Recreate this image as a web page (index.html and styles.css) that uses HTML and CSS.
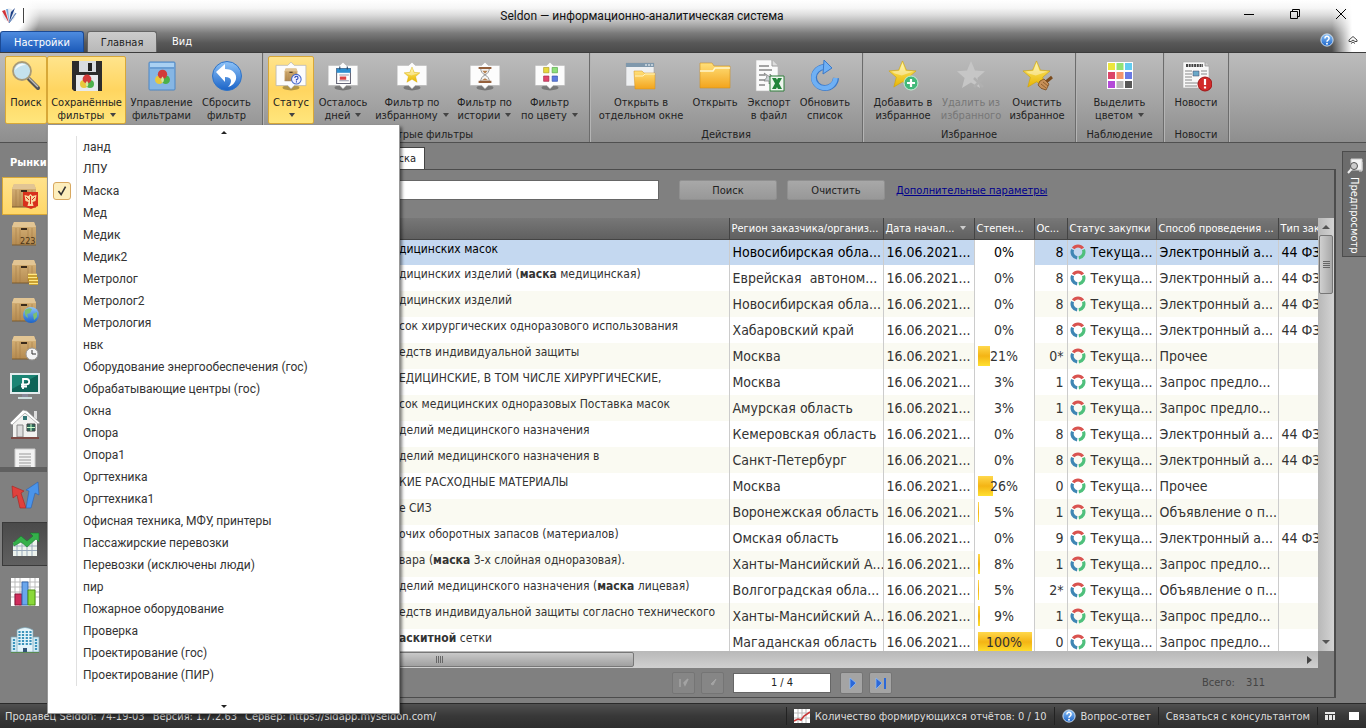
FILE: index.html
```html
<!DOCTYPE html>
<html lang="ru">

<head>
  <meta charset="utf-8">
  <meta name="viewport" content="width=device-width,initial-scale=1">
  <title>Seldon — информационно-аналитическая система</title>
  <link rel="stylesheet" href="styles.css">
</head>

<body>
  <!-- shared icon parts -->
  <svg class="defs" width="0" height="0" aria-hidden="true">
    <defs>
      <linearGradient id="gBlue" x1="0" y1="0" x2="0" y2="1">
        <stop offset="0" stop-color="#8fc4f8" />
        <stop offset="1" stop-color="#1a63c8" />
      </linearGradient>
      <linearGradient id="gFolder" x1="0" y1="0" x2="0" y2="1">
        <stop offset="0" stop-color="#ffe07a" />
        <stop offset="1" stop-color="#f3a41c" />
      </linearGradient>
      <linearGradient id="gStar" x1="0" y1="0" x2="0" y2="1">
        <stop offset="0" stop-color="#fff07a" />
        <stop offset="1" stop-color="#e8b400" />
      </linearGradient>
      <linearGradient id="gBox" x1="0" y1="0" x2="0" y2="1">
        <stop offset="0" stop-color="#d9b67c" />
        <stop offset="1" stop-color="#b48a50" />
      </linearGradient>
      <symbol id="box" viewBox="0 0 28 28">
        <path d="M3 2h20l2 5v18H1V7z" fill="url(#gBox)" />
        <path d="M3 2h20l2 5H1z" fill="#e2c594" />
        <path d="M5 8v17M9 8v17M17 8v17M21 8v17" stroke="#a57e48" stroke-width=".6" />
        <path d="M1 25h24" stroke="#7d5c30" />
        <rect x="10" y="8" width="6" height="2" fill="#3a2a1a" />
      </symbol>
      <symbol id="balls" viewBox="0 0 16 16">
        <circle cx="5" cy="10" r="4" fill="#e8c83c" />
        <circle cx="11" cy="10" r="4" fill="#4cb04a" />
        <circle cx="8" cy="5" r="4.4" fill="#d23a3a" />
        <path d="M8 7a4 4 0 0 1 0 6a4 4 0 0 1 0-6z" fill="#d9e6a0" />
      </symbol>
      <symbol id="card" viewBox="0 0 30 30">
        <ellipse cx="15" cy="26" rx="8" ry="2.5" fill="#000" opacity=".3" />
        <path d="M1 5h11l3-3 3 3h11v19H18l-3 3-3-3H1z" fill="#fcfcfc" stroke="#b4b4b4" stroke-width=".7" stroke-linejoin="round" />
      </symbol>
      <symbol id="star" viewBox="0 0 30 30">
        <path d="M15 1l4 9.500 10 .8-7.600 6.600L24 28l-9-5.400L6 28l2.600-10.100L1 11.300l10-.8z" fill="url(#gStar)" stroke="#d0a200" stroke-width=".6" />
        <path d="M15 3l3.200 8.300 8 .7-12 4L7 14 4 12l7.600-.7z" fill="#fff" opacity=".4" />
      </symbol>
      <symbol id="status" viewBox="0 0 16 16">
        <g fill="none" stroke-width="3.200">
          <path d="M3.200 4.400A6 6 0 0 1 12.800 4.400" stroke="#d9534f" />
          <path d="M13.400 5.600A6 6 0 0 1 8.800 13.900" stroke="#4fc07c" />
          <path d="M7.200 13.900A6 6 0 0 1 2.600 5.600" stroke="#3f86b4" />
        </g>
      </symbol>
      <symbol id="help" viewBox="0 0 16 16">
        <circle cx="8" cy="8" r="7" fill="url(#gBlue)" stroke="#dcebfa" />
        <path d="M5.600 6.200a2.400 2.400 0 1 1 3.600 2Q8 8.900 8 10" fill="none" stroke="#fff" stroke-width="1.800" />
        <circle cx="8" cy="12.200" r="1.100" fill="#fff" />
      </symbol>
    </defs>
  </svg>

  <header class="titlebar">
    <div class="title-row">
      <svg class="logo" width="18" height="18" viewBox="0 0 18 18">
        <circle cx="9" cy="8" r="6.500" fill="#e4e9f0" />
        <path d="M2 4l3-1 4 13z" fill="#d23338" />
        <path d="M6 2l2 0 1.500 14z" fill="#7da8d8" />
        <path d="M15 1L9 16 11 5z" fill="#1c3f86" />
        <path d="M16 6L9 16z" stroke="#6c8dc0" />
      </svg>
      <span class="divider"></span>
      <h1>Seldon — информационно-аналитическая система</h1>
      <div class="window-buttons">
        <button aria-label="Свернуть"><svg width="12" height="12"><path d="M1 6.500h10" /></svg></button>
        <button aria-label="Восстановить"><svg width="12" height="12"><path d="M1.500 3.500h7v7h-7zM3.500 3V1.500h7v7H9" /></svg></button>
        <button aria-label="Закрыть"><svg width="12" height="12"><path d="M1 1l10 10M11 1L1 11" /></svg></button>
      </div>
    </div>
    <nav class="tabs">
      <button class="tab settings">Настройки</button>
      <button class="tab active">Главная</button>
      <button class="tab">Вид</button>
      <div class="tabs-right">
        <button aria-label="Справка"><svg width="14" height="14"><use href="#help" /></svg></button>
        <button aria-label="Свернуть ленту"><svg width="10" height="10" viewBox="0 0 10 10"><path d="M1 5l4-3.500L9 5v1.500H7L5 5 3 6.500H1z" fill="#fff" stroke="#333" stroke-width=".9" /><path d="M3 8.500l2-1.500 2 1.500" fill="none" stroke="#333" stroke-width=".9" /></svg></button>
      </div>
    </nav>
  </header>

  <section class="ribbon">
    <div class="group search">
      <div class="buttons">
        <button class="tool on">
          <svg width="32" height="32" viewBox="0 0 32 32"><path d="M19 19l9 9" stroke="#555" stroke-width="4" stroke-linecap="round" /><path d="M19 18l9 9" stroke="#bbb" stroke-width="1.500" /><circle cx="12" cy="11" r="9" fill="#c4e2ee" stroke="#a89a78" stroke-width="1.800" /><path d="M5 10a7 7 0 0 1 11-5q-6 0-11 5z" fill="#fff" opacity=".8" /></svg>
          <span>Поиск</span>
        </button>
        <button class="tool on">
          <svg width="32" height="32" viewBox="0 0 32 32"><path d="M1 1h30v30H3l-2-2z" fill="#2c2c2c" /><path d="M8 1h17v11H8z" fill="#d8dce0" /><path d="M17 3h4v8h-4z" fill="#222" /><path d="M5 15h22v16H5z" fill="#e6e9ec" /><use href="#balls" x="8" y="14" width="16" height="16" /></svg>
          <span>Сохранённые<br>фильтры <i class="caret"></i></span>
        </button>
        <button class="tool">
          <svg width="32" height="32" viewBox="0 0 32 32"><rect x="3" y="2" width="26" height="28" rx="1" fill="#86b6e4" stroke="#4c86c4" /><path d="M4 3h24v4H4z" fill="#a9d0f2" /><path d="M4 8h24" stroke="#4c86c4" /><use href="#balls" x="8" y="9" width="17" height="17" /></svg>
          <span>Управление<br>фильтрами</span>
        </button>
        <button class="tool">
          <svg width="32" height="32" viewBox="0 0 32 32"><circle cx="16" cy="16" r="14.500" fill="url(#gBlue)" stroke="#2f74c8" /><path d="M5 12l9-8v5c8 0 12 5 11 10-1 4-4 7-8 8 4-4 5-10-3-10v5z" fill="#fff" /></svg>
          <span>Сбросить<br>фильтр</span>
        </button>
      </div>
    </div>
    <div class="group quick">
      <div class="buttons">
        <button class="tool on">
          <svg width="32" height="32" viewBox="0 0 30 30"><use href="#card" /><use href="#box" x="8" y="7" width="15" height="14" /><circle cx="20" cy="18" r="4.500" fill="#eef" stroke="#4668c8" /><path d="M18.600 16.800a1.500 1.500 0 1 1 1.500 1.500v1M20.100 20v1" fill="none" stroke="#2344b4" /></svg>
          <span>Статус<br><i class="caret"></i></span>
        </button>
        <button class="tool">
          <svg width="32" height="32" viewBox="0 0 30 30"><use href="#card" /><path d="M9 8h13v14H9z" fill="#fff" stroke="#667" /><path d="M9 8h13v4H9z" fill="#2e8fd0" /><path d="M12 6v3M19 6v3" stroke="#246" /><path d="M11.500 14h9M11.500 19.500h9" stroke="#99a" /><path d="M12 15.500h6v3h-6z" fill="#d44" /></svg>
          <span>Осталось<br>дней <i class="caret"></i></span>
        </button>
        <button class="tool">
          <svg width="32" height="32" viewBox="0 0 30 30"><use href="#card" /><use href="#star" x="7" y="6" width="16" height="16" /></svg>
          <span>Фильтр по<br>избранному <i class="caret"></i></span>
        </button>
        <button class="tool">
          <svg width="32" height="32" viewBox="0 0 30 30"><use href="#card" /><path d="M11 8q0 4 4 6-4 2-4 6h8q0-4-4-6 4-2 4-6z" fill="#f4f4f4" stroke="#888" stroke-width=".8" /><path d="M9 7.500h12M9 20.500h12" stroke="#94603c" stroke-width="2" /><path d="M12.500 10h5L15 13zM12 19l3-2 3 2z" fill="#b58050" /></svg>
          <span>Фильтр по<br>истории <i class="caret"></i></span>
        </button>
        <button class="tool">
          <svg width="32" height="32" viewBox="0 0 30 30"><use href="#card" /><path d="M9 7h5v5H9z" fill="#e8d83c" stroke="#aa9a20" stroke-width=".6" /><path d="M17 7h5v5h-5z" fill="#8ee07a" stroke="#50a040" stroke-width=".6" /><path d="M9 15h5v5H9z" fill="#e0446c" stroke="#a02848" stroke-width=".6" /><path d="M17 15h5v5h-5z" fill="#5c7ce0" stroke="#3450a8" stroke-width=".6" /></svg>
          <span>Фильтр<br>по цвету <i class="caret"></i></span>
        </button>
      </div>
      <p>Быстрые фильтры</p>
    </div>
    <div class="group actions">
      <div class="buttons">
        <button class="tool">
          <svg width="32" height="32" viewBox="0 0 32 32"><path d="M1 3h28v23H1z" fill="#eef0f2" stroke="#aaa" stroke-width=".6" /><path d="M1 3h28v4H1z" fill="#7f98ac" /><path d="M20 5h2M23 5h2M26 5h2" stroke="#fff" /><path d="M9 11h8l2 2h11v16H10z" fill="url(#gFolder)" stroke="#d09020" stroke-width=".5" /><path d="M10 16h8l2-2h10" fill="none" stroke="#fff3c0" /></svg>
          <span>Открыть в<br>отдельном окне</span>
        </button>
        <button class="tool">
          <svg width="32" height="32" viewBox="0 0 32 32"><path d="M1 3h12l2 3h16v22H1z" fill="url(#gFolder)" stroke="#d09020" stroke-width=".6" /><path d="M1 11h13l2-3h15" fill="none" stroke="#fff6cc" stroke-width="1.500" /></svg>
          <span>Открыть</span>
        </button>
        <button class="tool">
          <svg width="32" height="32" viewBox="0 0 32 32"><path d="M3 0h16l6 6v25H3z" fill="#fafafa" stroke="#bbb" stroke-width=".6" /><path d="M19 0v6h6" fill="#ddd" stroke="#999" /><path d="M6 6h10M6 10h13M6 15h6M6 20h6M6 25h6" stroke="#888" stroke-width="1.300" /><path d="M11 13l6 4v-3l4 5-5 5v-3h-5l3-4z" fill="#ccd2d6" stroke="#777" stroke-width=".7" /><path d="M17 16h14v15H17z" fill="#eef6ee" stroke="#2e7d3a" /><path d="M19 18h4l6 11h-4zM25 18h4l-6 11h-4z" fill="#23843a" /></svg>
          <span>Экспорт<br>в файл</span>
        </button>
        <button class="tool">
          <svg width="32" height="32" viewBox="0 0 32 32"><path d="M27 18a11 10.500 0 1 1-11-11" fill="none" stroke="#3a78c8" stroke-width="6" /><path d="M26.500 18a11 10.500 0 1 1-11-11" fill="none" stroke="#6fb0f4" stroke-width="4.500" /><path d="M15 0l8 8-9 6z" fill="#6fb0f4" stroke="#3a78c8" /></svg>
          <span>Обновить<br>список</span>
        </button>
      </div>
      <p>Действия</p>
    </div>
    <div class="group favorites">
      <div class="buttons">
        <button class="tool">
          <svg width="32" height="32" viewBox="0 0 32 32"><use href="#star" x="1" y="0" width="29" height="29" /><circle cx="24" cy="23" r="7" fill="#43b87a" stroke="#c8f0d8" /><path d="M20 23h8M24 19v8" stroke="#fff" stroke-width="2.200" /></svg>
          <span>Добавить в<br>избранное</span>
        </button>
        <button class="tool" disabled>
          <svg width="32" height="32" viewBox="0 0 32 32"><path d="M16 1l4 9.500 10 .8-7.600 6.600L25 28l-9-5.400L7 28l2.600-10.100L2 11.300l10-.8z" fill="#c6c6c6" /><path d="M19 18l9 9M28 18l-9 9" stroke="#b0b0b0" stroke-width="2.500" /></svg>
          <span>Удалить из<br>избранного</span>
        </button>
        <button class="tool">
          <svg width="32" height="32" viewBox="0 0 32 32"><use href="#star" x="1" y="0" width="29" height="29" /><path d="M31 17l-6 5" stroke="#7a4a1c" stroke-width="3" /><path d="M19 21l4-2 5 5-3 6q-6-1-8-5z" fill="#c89058" stroke="#7a4a1c" stroke-width=".8" /><path d="M20 24l5 4M22 22l5 4" stroke="#7a4a1c" stroke-width=".7" /></svg>
          <span>Очистить<br>избранное</span>
        </button>
      </div>
      <p>Избранное</p>
    </div>
    <div class="group watch">
      <div class="buttons">
        <button class="tool">
          <svg width="32" height="32" viewBox="0 0 32 32"><path d="M3 2h26v27H3z" fill="#fff" /><path d="M4 3h7v7H4z" fill="#ece63c" /><path d="M12.500 3h7v7h-7z" fill="#92e274" /><path d="M21 3h7v7h-7z" fill="#62ccf0" /><path d="M4 12h7v7H4z" fill="#dc4468" /><path d="M12.500 12h7v7h-7z" fill="#f4946c" /><path d="M21 12h7v7h-7z" fill="#6a7ae4" /><path d="M4 21h7v7H4z" fill="#b44ad8" /><path d="M12.500 21h7v7h-7z" fill="#b8b8b8" /><path d="M21 21h7v7h-7z" fill="#585858" /></svg>
          <span>Выделить<br>цветом <i class="caret"></i></span>
        </button>
      </div>
      <p>Наблюдение</p>
    </div>
    <div class="group news">
      <div class="buttons">
        <button class="tool">
          <svg width="32" height="32" viewBox="0 0 32 32"><path d="M3 2h22l4 4v22H3z" fill="#f8f8f8" stroke="#aaa" stroke-width=".6" /><path d="M25 2v4h4" fill="#ccc" stroke="#888" stroke-width=".7" /><path d="M6 5.500h17" stroke="#444" stroke-width="3" stroke-dasharray="2 .7" /><path d="M5 11h7M5 14h7M5 17h7M5 20h7M5 23h14M5 26h12M21 11h6M21 14h6" stroke="#888" /><path d="M13 11h6v5h-6z" fill="#6aa8c8" stroke="#446" stroke-width=".5" /><circle cx="25" cy="24" r="7" fill="#d22a2a" stroke="#a01414" /><path d="M25 19v6M25 26.500v2" stroke="#fff" stroke-width="2.200" /></svg>
          <span>Новости</span>
        </button>
      </div>
      <p>Новости</p>
    </div>
  </section>

  <div class="workspace">
    <aside class="sidebar">
      <h2>Рынки</h2>
      <div class="markets">
        <button class="side on" aria-label="44 ФЗ"><svg width="28" height="28"><use href="#box" /><path d="M12 10h15v14l-7 3-8-3z" fill="#d8301c" /><path d="M19.500 12l2 2 4-1-1 6-3 1 1 4h-6l1-4-3-1-1-6 4 1z" fill="#f8d8a0" /><path d="M19.500 14v8M15 15l3 3M24 15l-3 3" stroke="#d8301c" /></svg></button>
        <button class="side" aria-label="223 ФЗ"><svg width="28" height="28"><use href="#box" /><text x="9" y="24">223</text></svg></button>
        <button class="side" aria-label="Коммерческие"><svg width="28" height="28"><use href="#box" /><path d="M17 16h9v3h1v8h-9v-4h-1z" fill="#b88a18" /><path d="M17 16.500h9M17 19.500h9M18 22.500h9M18 25.500h9" stroke="#ffe884" stroke-width="1.600" /></svg></button>
        <button class="side" aria-label="Зарубежные"><svg width="28" height="28"><use href="#box" /><circle cx="20" cy="19" r="8" fill="url(#gBlue)" /><path d="M14 14q4-3 7-1l-2 4-3 1 1 4q-4-2-3-8zM22 18l4-2v5l-3 3z" fill="#7cc070" /></svg></button>
        <button class="side" aria-label="Планы"><svg width="28" height="28"><use href="#box" /><circle cx="21" cy="20" r="6" fill="#f4f4f4" stroke="#999" /><path d="M21 16v4h4" fill="none" stroke="#333" /></svg></button>
        <button class="side" aria-label="Торги"><svg width="32" height="30"><path d="M1 2h30v21H1z" fill="#e4ecee" /><path d="M3 4h26v17H3z" fill="#0e6458" /><path d="M3 4h26L3 18z" fill="#1b8474" /><path d="M14 18V8h3.500a2.700 2.700 0 0 1 0 5.400H12M12 15.500h6" fill="none" stroke="#fff" stroke-width="1.800" /><path d="M13 23h6v3h-6z" fill="#889" /><path d="M9 27h14" stroke="#cdd" stroke-width="2" /></svg></button>
        <button class="side" aria-label="Недвижимость"><svg width="32" height="32"><path d="M25 3h3v8h-3z" fill="#ddd" /><path d="M4 14L15 4l13 10v15H4z" fill="#f2f2f0" /><path d="M1 15L14 2l4 1 13 12-2 1L16 5 3 17z" fill="#fff" stroke="#999" stroke-width=".7" /><path d="M8 17h6v12H8z" fill="#ddd" stroke="#888" /><path d="M18 16h8v7h-8z" fill="#2e6a5c" stroke="#444" /><path d="M22 16v7M18 19.500h8" stroke="#cfc" /><path d="M14 8h4v4h-4z" fill="#377" /><path d="M2 30h28" stroke="#7d4a44" stroke-width="2" /></svg></button>
        <button class="side" aria-label="Документы"><svg width="28" height="28"><path d="M4 1h20v27H4z" fill="#f2f2f2" stroke="#ccc" /><path d="M8 6h12M8 9h12M8 12h12M8 15h12M8 18h12M8 21h12M8 24h12" stroke="#999" /></svg></button>
      </div>
      <div class="analytics">
        <button class="side" aria-label="Сравнение"><svg width="30" height="30"><path d="M2 5l12 5-3 2 5 15h-6L7 14l-4 3z" fill="#e0403c" stroke="#a8201c" stroke-width=".6" /><path d="M28 1l1 13-4-2-4 15h-5l3-17-3-1z" fill="#4a94ea" stroke="#2a60b0" stroke-width=".6" /></svg></button>
        <button class="side pressed" aria-label="Динамика"><svg width="30" height="30"><path d="M3 13l8 0 6 3 10-7v18H3z" fill="#eef4ee" /><path d="M3 17h24M3 21.500h24M7 13v14M12 13v14M17 14v13M22 12v15" stroke="#9ab" /><path d="M3 14L11 7l6 5 6-5-3-3h9v9l-3-3-9 8-6-5-7 4z" fill="#34b04a" stroke="#167a2a" stroke-width=".6" /></svg></button>
        <button class="side" aria-label="Диаграммы"><svg width="30" height="30"><path d="M1 1h28v28H1z" fill="#fff" /><path d="M1 5h28M1 10h28M1 15h28M1 20h28M5 1v28M25 1v28M20 1v28M10 1v28" stroke="#bbb" /><path d="M5 17h7v11H5z" fill="#d02c5c" stroke="#8a1438" /><path d="M12 5h6v23h-6z" fill="#6aa6ec" stroke="#3468b0" /><path d="M18 13h7v15h-7z" fill="#8ad83a" stroke="#4c9410" /></svg></button>
        <button class="side" aria-label="Компании"><svg width="30" height="30"><path d="M1 12h8v15H1zM21 12h8v15h-8z" fill="#d4ecf4" stroke="#7aa4b4" stroke-width=".7" /><path d="M7 5q8-5 16 0v22H7z" fill="#e4f4fa" stroke="#7aa4b4" stroke-width=".7" /><path d="M9.500 6v15M13 6v15M16.800 6v15M20.500 6v15M4 14v11M26 14v11" stroke="#3c94bc" stroke-width="2.200" stroke-dasharray="2 1" /><path d="M13 23h4v4h-4z" fill="#357" /><path d="M1 27.500h28" stroke="#5a8a50" /></svg></button>
      </div>
    </aside>

    <main>
      <nav class="doc-tabs"><button>Маска</button></nav>
      <section class="panel">
        <form class="search-row">
          <input type="text" aria-label="Строка поиска">
          <button type="button">Поиск</button>
          <button type="button">Очистить</button>
          <a href="#">Дополнительные параметры</a>
        </form>
        <div class="grid">
          <div class="table-wrap">
            <table>
              <colgroup>
                <col class="c-lead"><col><col class="c-region"><col class="c-date"><col class="c-rate"><col class="c-left"><col class="c-status"><col class="c-method"><col class="c-type">
              </colgroup>
              <thead>
                <tr><th class="lead"></th><th class="name"></th><th>Регион заказчика/организ...</th><th>Дата начал... <i class="caret"></i></th><th>Степен...</th><th>Ос...</th><th>Статус закупки</th><th>Способ проведения ...</th><th>Тип зак</th></tr>
              </thead>
              <tbody>
                <tr class="selected"><td></td><td class="name">дицинских масок</td><td>Новосибирская обла...</td><td>16.06.2021...</td><td class="rate">0%</td><td class="left">8</td><td><svg><use href="#status" /></svg>Текуща...</td><td>Электронный а...</td><td>44 ФЗ</td></tr>
                <tr><td></td><td class="name">дицинских изделий (<b>маска</b> медицинская)</td><td>Еврейская&nbsp; автоном...</td><td>16.06.2021...</td><td class="rate">0%</td><td class="left">8</td><td><svg><use href="#status" /></svg>Текуща...</td><td>Электронный а...</td><td>44 ФЗ</td></tr>
                <tr><td></td><td class="name">дицинских изделий</td><td>Новосибирская обла...</td><td>16.06.2021...</td><td class="rate">0%</td><td class="left">8</td><td><svg><use href="#status" /></svg>Текуща...</td><td>Электронный а...</td><td>44 ФЗ</td></tr>
                <tr><td></td><td class="name">сок хирургических одноразового использования</td><td>Хабаровский край</td><td>16.06.2021...</td><td class="rate">0%</td><td class="left">8</td><td><svg><use href="#status" /></svg>Текуща...</td><td>Электронный а...</td><td>44 ФЗ</td></tr>
                <tr><td></td><td class="name">едств индивидуальной защиты</td><td>Москва</td><td>16.06.2021...</td><td class="rate"><div class="bar" style="width: 21%"></div>21%</td><td class="left">0*</td><td><svg><use href="#status" /></svg>Текуща...</td><td>Прочее</td><td></td></tr>
                <tr><td></td><td class="name">ЕДИЦИНСКИЕ, В ТОМ ЧИСЛЕ ХИРУРГИЧЕСКИЕ,</td><td>Москва</td><td>16.06.2021...</td><td class="rate">3%</td><td class="left">1</td><td><svg><use href="#status" /></svg>Текуща...</td><td>Запрос предло...</td><td></td></tr>
                <tr><td></td><td class="name">сок медицинских одноразовых Поставка масок</td><td>Амурская область</td><td>16.06.2021...</td><td class="rate">3%</td><td class="left">1</td><td><svg><use href="#status" /></svg>Текуща...</td><td>Запрос предло...</td><td></td></tr>
                <tr><td></td><td class="name">делий медицинского назначения</td><td>Кемеровская область</td><td>16.06.2021...</td><td class="rate">0%</td><td class="left">8</td><td><svg><use href="#status" /></svg>Текуща...</td><td>Электронный а...</td><td>44 ФЗ</td></tr>
                <tr><td></td><td class="name">делий медицинского назначения в</td><td>Санкт-Петербург</td><td>16.06.2021...</td><td class="rate">0%</td><td class="left">8</td><td><svg><use href="#status" /></svg>Текуща...</td><td>Электронный а...</td><td>44 ФЗ</td></tr>
                <tr><td></td><td class="name">КИЕ РАСХОДНЫЕ МАТЕРИАЛЫ</td><td>Москва</td><td>16.06.2021...</td><td class="rate"><div class="bar" style="width: 26%"></div>26%</td><td class="left">0</td><td><svg><use href="#status" /></svg>Текуща...</td><td>Прочее</td><td></td></tr>
                <tr><td></td><td class="name">е СИЗ</td><td>Воронежская область</td><td>16.06.2021...</td><td class="rate"><div class="bar" style="width: 2%"></div>5%</td><td class="left">1</td><td><svg><use href="#status" /></svg>Текуща...</td><td>Объявление о п...</td><td></td></tr>
                <tr><td></td><td class="name">очих оборотных запасов (материалов)</td><td>Омская область</td><td>16.06.2021...</td><td class="rate">0%</td><td class="left">9</td><td><svg><use href="#status" /></svg>Текуща...</td><td>Электронный а...</td><td>44 ФЗ</td></tr>
                <tr><td></td><td class="name">вара (<b>маска</b> 3-х слойная одноразовая).</td><td>Ханты-Мансийский А...</td><td>16.06.2021...</td><td class="rate"><div class="bar" style="width: 4%"></div>8%</td><td class="left">1</td><td><svg><use href="#status" /></svg>Текуща...</td><td>Запрос предло...</td><td></td></tr>
                <tr><td></td><td class="name">делий медицинского назначения (<b>маска</b> лицевая)</td><td>Волгоградская обла...</td><td>16.06.2021...</td><td class="rate"><div class="bar" style="width: 2%"></div>5%</td><td class="left">2*</td><td><svg><use href="#status" /></svg>Текуща...</td><td>Объявление о п...</td><td></td></tr>
                <tr><td></td><td class="name">едств индивидуальной защиты согласно технического</td><td>Ханты-Мансийский А...</td><td>16.06.2021...</td><td class="rate"><div class="bar" style="width: 5%"></div>9%</td><td class="left">1</td><td><svg><use href="#status" /></svg>Текуща...</td><td>Запрос предло...</td><td></td></tr>
                <tr><td></td><td class="name"><b>аскитной</b> сетки</td><td>Магаданская область</td><td>16.06.2021...</td><td class="rate"><div class="bar" style="width: 100%"></div>100%</td><td class="left">0</td><td><svg><use href="#status" /></svg>Текуща...</td><td>Запрос предло...</td><td></td></tr>
              </tbody>
            </table>
          </div>
          <div class="vscroll">
            <i class="arrow up"></i>
            <div class="thumb"></div>
            <i class="arrow down"></i>
          </div>
          <div class="hscroll">
            <div class="thumb"></div>
            <i class="arrow right"></i>
          </div>
        </div>
        <footer class="pager">
          <button disabled aria-label="Первая"><svg width="16" height="14"><path d="M4 3v8M12 3l-4 4 1 2z" fill="#a4a4a4" stroke="#a4a4a4" stroke-width="1.500" /></svg></button>
          <button disabled aria-label="Предыдущая"><svg width="16" height="14"><path d="M11 3L6 8l2 1z" fill="#a4a4a4" stroke="#a4a4a4" /></svg></button>
          <input type="text" value="1 / 4" aria-label="Страница">
          <button aria-label="Следующая"><svg width="16" height="14"><path d="M6 2l6 5-6 6z" fill="#2c68d8" stroke="#8ab8f4" stroke-width=".8" /></svg></button>
          <button aria-label="Последняя"><svg width="16" height="14"><path d="M3 2l6 5-6 6z" fill="#2c68d8" stroke="#8ab8f4" stroke-width=".8" /><path d="M12 2v11" stroke="#2c68d8" stroke-width="2" /></svg></button>
          <p class="total">Всего: <span>311</span></p>
        </footer>
      </section>
    </main>

    <aside class="rail">
      <button>
        <svg width="16" height="16" viewBox="0 0 16 16"><path d="M4 1h11v11H4z" fill="#f4f4f4" stroke="#ccc" /><path d="M12 13h3V4" stroke="#ddd" fill="none" /><circle cx="7" cy="8" r="3.500" fill="#ccc" stroke="#555" /><path d="M4.500 11L1 15" stroke="#eee" stroke-width="2" /></svg>
        <span>Предпросмотр</span>
      </button>
    </aside>
  </div>

  <footer class="statusbar">
    <span>Продавец Seldon: 74-19-03</span>
    <span>Версия: 1.7.2.63</span>
    <span>Сервер: https://sidapp.myseldon.com/</span>
    <div class="status-right">
      <button class="reports"><svg width="16" height="14"><path d="M0 0h16v14H0z" fill="#fff" /><path d="M4 0v14M8 0v14M12 0v14M0 4h16M0 9h16" stroke="#bbb" /><path d="M0 12l4-2 3 1 3-4 6-4" fill="none" stroke="#c83838" stroke-width="1.600" /></svg>Количество формирующихся отчётов: 0 / 10</button>
      <button class="faq"><svg width="14" height="14"><use href="#help" /></svg>Вопрос-ответ</button>
      <button class="consult">Связаться с консультантом</button>
      <button class="view" aria-label="Колонки"><svg width="12" height="10"><path d="M1 1h10v2H1zM1 4h3v5H1zM5 4h3v5H5zM9 4h2v5H9z" fill="#e8e8e8" /></svg></button>
      <button class="view" aria-label="Окно"><svg width="12" height="10"><path d="M1 1h10v8H1z" fill="#fff" /></svg></button>
    </div>
  </footer>

  <!-- saved filters drop-down -->
  <div class="menu">
    <i class="arrow up"></i>
    <ul>
      <li><button>ланд</button></li>
      <li><button>ЛПУ</button></li>
      <li class="checked"><svg class="check" width="18" height="18" viewBox="0 0 18 18"><path d="M5 9l3 4 5-9" fill="none" stroke="#333" stroke-width="1.800" /></svg><button>Маска</button></li>
      <li><button>Мед</button></li>
      <li><button>Медик</button></li>
      <li><button>Медик2</button></li>
      <li><button>Метролог</button></li>
      <li><button>Метролог2</button></li>
      <li><button>Метрология</button></li>
      <li><button>нвк</button></li>
      <li><button>Оборудование энергообеспечения (гос)</button></li>
      <li><button>Обрабатывающие центры (гос)</button></li>
      <li><button>Окна</button></li>
      <li><button>Опора</button></li>
      <li><button>Опора1</button></li>
      <li><button>Оргтехника</button></li>
      <li><button>Оргтехника1</button></li>
      <li><button>Офисная техника, МФУ, принтеры</button></li>
      <li><button>Пассажирские перевозки</button></li>
      <li><button>Перевозки (исключены люди)</button></li>
      <li><button>пир</button></li>
      <li><button>Пожарное оборудование</button></li>
      <li><button>Проверка</button></li>
      <li><button>Проектирование (гос)</button></li>
      <li><button>Проектирование (ПИР)</button></li>
    </ul>
    <i class="arrow down"></i>
  </div>
</body>

</html>
```

FILE: styles.css
```css
* {
  box-sizing: border-box;
}

html,
body {
  height: 100%;
  margin: 0;
}

body {
  display: flex;
  flex-direction: column;
  position: relative;
  overflow: hidden;
  background: #808080;
  color: #222;
  font: 11px/13px "DejaVu Sans Condensed", "Noto Sans", sans-serif;
}

h1,
h2,
p,
ul {
  margin: 0;
  padding: 0;
}

button {
  border: 0;
  padding: 0;
  background: none;
  color: inherit;
  font: inherit;
}

svg {
  flex: none;
}

.defs {
  position: absolute;
}

.caret {
  display: inline-block;
  border: 3px solid transparent;
  border-top: 4px solid #444;
  border-bottom: 0;
  margin-left: 2px;
  vertical-align: 2px;
}

/* title bar */
.titlebar {
  background:
    linear-gradient(to left, #fff 14px, rgba(255, 255, 255, 0) 34px),
    radial-gradient(ellipse 40px 34px at 0 16px, #fff 60%, rgba(255, 255, 255, 0)),
    linear-gradient(#fff, #f6f6f6 8px, #dcdcdc 15px, #aaa 25px, #7c7c7c 33px, #585858 43px, #4a4a4a);
}

.title-row {
  display: flex;
  align-items: center;
  height: 31px;
  color: #111;
}

.title-row h1 {
  flex: 1;
  padding-left: 34px;
  font: 12px/16px Roboto, "Noto Sans", sans-serif;
  text-align: center;
}

.divider {
  width: 1px;
  height: 15px;
  margin-left: 5px;
  background: #444;
}

.window-buttons {
  display: flex;
  padding: 0 2px 4px 0;
}

.window-buttons button {
  width: 46px;
  line-height: 0;
}

.window-buttons path {
  fill: none;
  stroke: #000;
}

.tabs {
  display: flex;
  align-items: flex-end;
  height: 21px;
}

.tab {
  height: 21px;
  padding: 0 15px;
  color: #fff;
}

.tab.settings {
  width: 84px;
  margin-right: 3px;
  padding: 0;
  border: 1px solid #1c4a94;
  border-bottom: 0;
  border-radius: 3px 3px 0 0;
  background: linear-gradient(#4e8ce0, #1c5ab8);
}

.tab.active {
  width: 70px;
  padding: 0;
  border: 1px solid #666;
  border-bottom: 0;
  border-radius: 3px 3px 0 0;
  background: linear-gradient(#ccc, #b8b8b8);
  color: #222;
}

.tabs-right {
  display: flex;
  gap: 14px;
  align-self: center;
  margin-left: auto;
  padding-right: 8px;
}

/* ribbon */
.ribbon {
  display: flex;
  height: 91px;
  padding-left: 5px;
  border-top: 1px solid #3c3c3c;
  border-bottom: 1px solid #505050;
  background: linear-gradient(#bcbcbc, #a6a6a6 50%, #8e8e8e);
}

.group {
  display: flex;
  flex-direction: column;
  justify-content: space-between;
  border-right: 1px solid #6c6c6c;
  box-shadow: 1px 0 #b4b4b4;
  padding: 3px 6px 1px;
  text-align: center;
}

.group.search {
  padding-left: 0;
}

.group.quick {
  padding: 3px 7px 1px 5px;
}

.buttons {
  display: grid;
}

.search .buttons {
  grid-template-columns: 42px 79px 71px 59px;
}

.quick .buttons {
  grid-template-columns: 46px 58px 80px 65px 65px;
}

.actions .buttons {
  grid-template-columns: 90px 58px 50px 62px;
}

.favorites .buttons {
  grid-template-columns: 68px 68px 64px;
}

.watch .buttons {
  grid-template-columns: 75px;
}

.news .buttons {
  grid-template-columns: 52px;
}

.tool {
  display: flex;
  flex-direction: column;
  align-items: center;
  gap: 4px;
  height: 68px;
  padding: 3px 0 0;
  border: 1px solid transparent;
  border-radius: 2px;
  white-space: nowrap;
}

.tool.on {
  border-color: #d8a838;
  background: linear-gradient(#ffe48c, #ffd560 50%, #ffe67c);
}

.tool:disabled {
  color: #777;
}

/* workspace */
.workspace {
  display: flex;
  flex: 1;
  min-height: 0;
}

.sidebar {
  width: 48px;
  flex: none;
}

.sidebar h2 {
  height: 34px;
  padding: 13px 0 0 10px;
  color: #fff;
  font-size: 11px;
  line-height: 13px;
}

.side {
  display: flex;
  align-items: center;
  justify-content: center;
  width: 46px;
  height: 38px;
  margin-left: 2px;
}

.side.on {
  border: 1px solid #d8a838;
  background: linear-gradient(#ffe28c, #ffd768);
}

.side text {
  font: 9px "DejaVu Sans Condensed", "Noto Sans", sans-serif;
  fill: #4a3418;
}

.markets {
  height: 290px;
  overflow: hidden;
}

.analytics {
  border-top: 5px solid #606060;
}

.analytics .side {
  height: 48px;
}

.analytics .pressed {
  height: 44px;
  margin: 2px 0 2px 2px;
  border: 1px solid #3a3a3a;
  background: linear-gradient(#4a4a4a, #606060);
}

main {
  display: flex;
  flex-direction: column;
  flex: 1;
  min-width: 0;
  padding-bottom: 5px;
}

.doc-tabs {
  padding: 4px 0 0 320px;
}

.doc-tabs button {
  width: 57px;
  height: 22px;
  padding-right: 8px;
  border: 1px solid #444;
  border-bottom: 0;
  background: #fff;
  text-align: right;
}

.panel {
  display: flex;
  flex-direction: column;
  flex: 1;
  min-height: 0;
  border: 1px solid #4c4c4c;
  border-width: 1px 2px 1px 0;
}

.search-row {
  display: flex;
  align-items: center;
  padding: 10px 0 18px;
}

.search-row input {
  flex: 0 1 611px;
  height: 20px;
  border: 1px solid #666;
  background: #fff;
}

.search-row button {
  width: 98px;
  height: 20px;
  margin-left: 10px;
  border: 1px solid #909090;
  border-radius: 2px;
  background: linear-gradient(#a8a8a8, #989898);
}

.search-row input + button {
  margin-left: 20px;
}

.search-row a {
  margin-left: 11px;
  color: #00008c;
}

.grid {
  display: grid;
  grid-template-columns: 1fr 16px;
  grid-template-rows: 1fr 17px;
  flex: 1;
  min-height: 0;
}

.table-wrap {
  overflow: hidden;
  background: #fff;
}

table {
  width: 100%;
  border-collapse: collapse;
  table-layout: fixed;
}

.c-lead { width: 350px; }
.c-region { width: 154px; }
.c-date { width: 91px; }
.c-rate { width: 60px; }
.c-left { width: 33px; }
.c-status { width: 89px; }
.c-method { width: 122px; }
.c-type { width: 40px; }

th,
td {
  overflow: hidden;
  white-space: nowrap;
  text-align: left;
}

th {
  height: 21px;
  padding: 0 0 0 2px;
  border-left: 1px solid #444;
  border-bottom: 1px solid #444;
  background: linear-gradient(#777, #606060);
  color: #fff;
  font-weight: normal;
}

th.lead,
th.name {
  border-left: 0;
}

th .caret {
  border-top-color: #ccc;
}

td {
  height: 26px;
  padding: 0 0 0 3px;
  border-left: 1px solid #ccc;
  color: #333;
  font-size: 14px;
  line-height: 18px;
}

td:first-child,
td.name {
  border-left: 0;
}

td.name {
  padding: 1px 0 0 1px;
  font-size: 12px;
  line-height: 16px;
  vertical-align: top;
}

td svg {
  width: 16px;
  height: 16px;
  margin: 0 5px 0 -1px;
  vertical-align: -3px;
}

tbody tr:nth-child(odd) td {
  background: #fafaf2;
}

tbody tr.selected td {
  background: #c4d8f0;
  color: #000;
}

tbody tr td.rate,
tbody tr.selected td.rate {
  position: relative;
  z-index: 0;
  padding: 0 3px;
  background: #fff;
  text-align: center;
}

td.left {
  padding-right: 3px;
  text-align: right;
}

.bar {
  position: absolute;
  z-index: -1;
  top: 3px;
  left: 3px;
  max-width: 54px;
  height: 20px;
  background: linear-gradient(#ffd84c, #f4b414 50%, #ffe030);
}

.arrow {
  display: block;
  width: 0;
  height: 0;
  border: 4px solid transparent;
}

.arrow.up {
  border-top: 0;
  border-bottom-color: #555;
}

.arrow.down {
  border-bottom: 0;
  border-top-color: #555;
}

.arrow.right {
  border-right: 0;
  border-left: 5px solid #444;
}

.vscroll {
  display: flex;
  flex-direction: column;
  align-items: center;
  padding: 7px 1px;
  background: linear-gradient(to right, #b8b8b8, #d4d4d4);
}

.vscroll .thumb {
  width: 14px;
  height: 59px;
  margin-top: 6px;
  border: 1px solid #777;
  border-radius: 2px;
  background:
    repeating-linear-gradient(#666 0 1px, transparent 1px 2px) center / 7px 7px no-repeat,
    linear-gradient(to right, #d0d0d0, #a8a8a8);
}

.vscroll .down {
  margin-top: auto;
}

.hscroll {
  display: flex;
  align-items: center;
  background: linear-gradient(#b8b8b8, #d0d0d0);
}

.hscroll .thumb {
  flex: 0 1 586px;
  height: 15px;
  border: 1px solid #777;
  border-radius: 2px;
  background:
    repeating-linear-gradient(to right, #666 0 1px, transparent 1px 2px) 387px center / 8px 7px no-repeat,
    linear-gradient(#c8c8c8, #a0a0a0);
}

.hscroll .right {
  margin: 0 6px 0 auto;
}

.pager {
  display: flex;
  align-items: center;
  gap: 6px;
  height: 29px;
  padding-left: 624px;
}

.pager button {
  display: flex;
  align-items: center;
  justify-content: center;
  width: 23px;
  height: 22px;
  border: 1px solid #757575;
  border-radius: 2px;
  background: #a4a4a4;
}

.pager button:disabled {
  background: #868686;
}

.pager input {
  width: 98px;
  height: 20px;
  margin: 0 3px;
  border: 1px solid #666;
  background: #fff;
  color: #222;
  font: inherit;
  text-align: center;
}

.total {
  margin-left: auto;
  padding-right: 69px;
  color: #444;
}

.total span {
  margin-left: 8px;
}

/* right rail */
.rail {
  width: 30px;
  flex: none;
  padding: 8px 0 0 6px;
}

.rail button {
  display: flex;
  flex-direction: column;
  align-items: center;
  gap: 3px;
  width: 24px;
  height: 106px;
  padding-top: 6px;
  border: 1px solid #4c4c4c;
  border-right: 0;
  background: #6c6c6c;
  color: #fff;
}

.rail span {
  writing-mode: vertical-rl;
}

/* status bar */
.statusbar {
  display: flex;
  align-items: center;
  gap: 8px;
  height: 25px;
  padding-left: 5px;
  border-top: 1px solid #2a2a2a;
  background: linear-gradient(#505050, #383838 50%, #2e2e2e);
  color: #ddd;
}

.status-right {
  display: flex;
  align-items: center;
  align-self: stretch;
  margin-left: auto;
}

.status-right button {
  display: flex;
  align-items: center;
  gap: 5px;
  height: 18px;
  padding: 0 7px;
  border-left: 1px solid #222;
}

.status-right .view {
  padding: 0 6px;
}

.status-right .view + .view {
  border-left: 0;
}

/* drop-down over the page */
.menu {
  position: absolute;
  top: 125px;
  left: 47px;
  width: 353px;
  padding: 6px 0 5px;
  background: #fff;
  border: 1px solid #999;
  border-width: 0 1px 1px;
  box-shadow: 2px 2px 3px rgba(0, 0, 0, 0.5);
}

.menu .arrow {
  margin: 0 auto;
  border-width: 3px;
}

.menu .arrow.up {
  border-top: 0;
  border-bottom-color: #222;
}

.menu .arrow.down {
  border-bottom: 0;
  border-top-color: #222;
}

.menu ul {
  margin: 2px 0 19px 28px;
  border-left: 1px solid #e0e0e0;
  list-style: none;
}

.menu li {
  display: flex;
  align-items: center;
  height: 22px;
  padding-left: 6px;
  color: #333;
  font: 12px/16px Roboto, "Noto Sans", sans-serif;
}

.check {
  margin: 0 12px 0 -30px;
  border: 1px solid #d8a860;
  border-radius: 3px;
  background: #fdeebc;
}
```
